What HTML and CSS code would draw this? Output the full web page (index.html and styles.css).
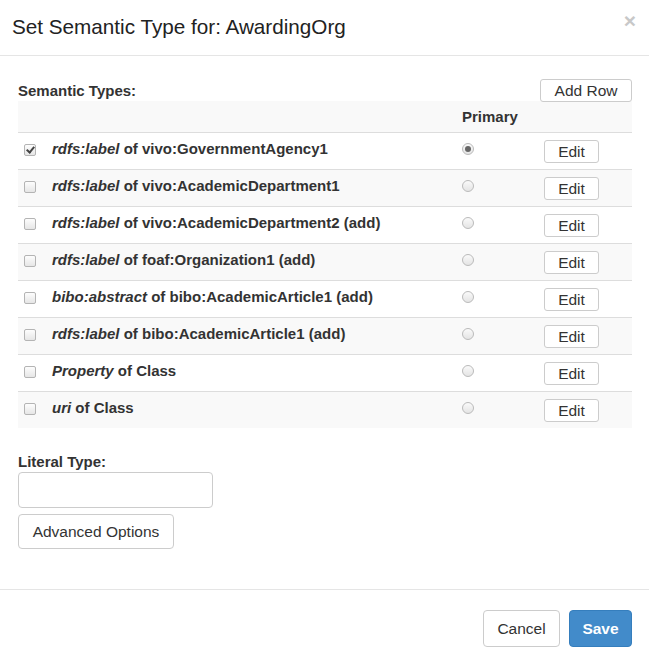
FILE: index.html
```html
<!DOCTYPE html>
<html>
<head>
<meta charset="utf-8">
<link rel="stylesheet" href="styles.css">
</head>
<body>
<div class="modal">
  <div class="modal-header">
    <h4 class="modal-title">Set Semantic Type for: AwardingOrg</h4>
    <span class="close">×</span>
  </div>
  <div class="modal-body">
    <div class="types-head">
      <span class="label">Semantic Types:</span>
      <button class="btn btn-sm">Add Row</button>
    </div>
    <table class="types">
      <tr class="thead">
        <td class="c-check"></td>
        <td class="c-label"></td>
        <td class="c-primary"><b>Primary</b></td>
        <td class="c-edit"></td>
      </tr>
      <tr>
        <td class="c-check"><span class="cb checked"></span></td>
        <td class="c-label"><i>rdfs:label</i> of vivo:GovernmentAgency1</td>
        <td class="c-primary"><span class="radio on"></span></td>
        <td class="c-edit"><button class="btn btn-sm">Edit</button></td>
      </tr>
      <tr>
        <td class="c-check"><span class="cb"></span></td>
        <td class="c-label"><i>rdfs:label</i> of vivo:AcademicDepartment1</td>
        <td class="c-primary"><span class="radio"></span></td>
        <td class="c-edit"><button class="btn btn-sm">Edit</button></td>
      </tr>
      <tr>
        <td class="c-check"><span class="cb"></span></td>
        <td class="c-label"><i>rdfs:label</i> of vivo:AcademicDepartment2 (add)</td>
        <td class="c-primary"><span class="radio"></span></td>
        <td class="c-edit"><button class="btn btn-sm">Edit</button></td>
      </tr>
      <tr>
        <td class="c-check"><span class="cb"></span></td>
        <td class="c-label"><i>rdfs:label</i> of foaf:Organization1 (add)</td>
        <td class="c-primary"><span class="radio"></span></td>
        <td class="c-edit"><button class="btn btn-sm">Edit</button></td>
      </tr>
      <tr>
        <td class="c-check"><span class="cb"></span></td>
        <td class="c-label"><i>bibo:abstract</i> of bibo:AcademicArticle1 (add)</td>
        <td class="c-primary"><span class="radio"></span></td>
        <td class="c-edit"><button class="btn btn-sm">Edit</button></td>
      </tr>
      <tr>
        <td class="c-check"><span class="cb"></span></td>
        <td class="c-label"><i>rdfs:label</i> of bibo:AcademicArticle1 (add)</td>
        <td class="c-primary"><span class="radio"></span></td>
        <td class="c-edit"><button class="btn btn-sm">Edit</button></td>
      </tr>
      <tr>
        <td class="c-check"><span class="cb"></span></td>
        <td class="c-label"><i>Property</i> of Class</td>
        <td class="c-primary"><span class="radio"></span></td>
        <td class="c-edit"><button class="btn btn-sm">Edit</button></td>
      </tr>
      <tr>
        <td class="c-check"><span class="cb"></span></td>
        <td class="c-label"><i>uri</i> of Class</td>
        <td class="c-primary"><span class="radio"></span></td>
        <td class="c-edit"><button class="btn btn-sm">Edit</button></td>
      </tr>
    </table>
    <div class="literal">
      <div class="label">Literal Type:</div>
      <input class="input" type="text">
      <button class="btn btn-adv">Advanced Options</button>
    </div>
  </div>
  <div class="modal-footer">
    <button class="btn btn-default">Cancel</button>
    <button class="btn btn-primary">Save</button>
  </div>
</div>
</body>
</html>
```
FILE: styles.css
```css
html, body {
  margin: 0;
  padding: 0;
  background: #fff;
}
body {
  font-family: "Liberation Sans", Arial, sans-serif;
  font-size: 15px;
  line-height: 20px;
  color: #333;
}
.modal {
  width: 649px;
  height: 662px;
  display: flex;
  flex-direction: column;
}
.modal-header {
  height: 56px;
  box-sizing: border-box;
  border-bottom: 1px solid #e5e5e5;
  display: flex;
  align-items: center;
  justify-content: space-between;
  padding: 0 13px 2px 12px;
}
.modal-title {
  margin: 0;
  font-size: 20.7px;
  font-weight: normal;
  color: #222;
  line-height: 26px;
}
.close {
  font-size: 21px;
  font-weight: bold;
  color: #c8c8c8;
  line-height: 21px;
  margin-top: -12px;
}
.modal-body {
  padding: 22px 17px 0 18px;
  flex: 1;
}
.types-head {
  display: flex;
  justify-content: space-between;
  align-items: center;
  height: 23px;
}
.label {
  font-weight: bold;
  color: #333;
}
.types-head .label {
  line-height: 18px;
  margin-top: 2px;
}
.btn {
  font-family: inherit;
  background: #fff;
  border: 1px solid #ccc;
  border-radius: 4px;
  color: #333;
  font-size: 15.5px;
  box-sizing: border-box;
  cursor: pointer;
  padding: 0;
}
.btn-sm {
  height: 23px;
  line-height: 21px;
  padding: 0 13px;
  border-radius: 3px;
}
.types-head .btn-sm {
  width: 92px;
  margin-top: 1px;
}
.types {
  width: 614px;
  border-collapse: collapse;
  border-spacing: 0;
}
.types td {
  padding: 0;
  height: 36px;
  border-top: 1px solid #ddd;
  vertical-align: middle;
}
.types tr:nth-child(odd) {
  background: #f9f9f9;
}
.types tr.thead td {
  height: 31px;
  border-top: none;
}
.types tr.thead td.c-label {
  height: 27px;
}
.c-check {
  width: 34px;
}
.c-check .cb {
  margin-left: 6px;
}
.types td.c-label {
  font-weight: bold;
  height: 32px;
  padding-bottom: 4px;
}
.c-label i {
  font-style: italic;
}
.c-primary {
  width: 82px;
}
.c-primary b {
  display: block;
  margin-top: 1px;
}
.c-edit {
  width: 88px;
}
.c-edit .btn-sm {
  width: 55px;
  padding: 0;
  margin-top: 1px;
}
.cb {
  display: block;
  width: 12px;
  height: 12px;
  box-sizing: border-box;
  border: 1px solid #b4b4b4;
  border-radius: 2px;
  background: linear-gradient(#fdfdfd, #e6e6e6);
  position: relative;
  margin-top: -3px;
}
.cb.checked::after {
  content: "";
  position: absolute;
  left: 3px;
  top: 0px;
  width: 3px;
  height: 6px;
  border: solid #444;
  border-width: 0 2px 2px 0;
  transform: rotate(40deg);
}
.radio {
  display: block;
  width: 12px;
  height: 12px;
  box-sizing: border-box;
  border: 1px solid #bbb;
  border-radius: 50%;
  background: linear-gradient(#fafafa, #e4e4e4);
  margin-left: 0;
  margin-top: -5px;
  position: relative;
}
.radio.on::after {
  content: "";
  position: absolute;
  left: 2px;
  top: 2px;
  width: 6px;
  height: 6px;
  border-radius: 50%;
  background: #666;
}
.literal {
  margin-top: 24px;
}
.literal .label {
  line-height: 20px;
}
.input {
  display: block;
  width: 195px;
  height: 36px;
  box-sizing: border-box;
  border: 1px solid #ccc;
  border-radius: 4px;
  margin-top: 0;
  font-family: inherit;
  font-size: 14px;
  padding: 6px 12px;
}
.btn-adv {
  display: block;
  margin-top: 6px;
  width: 156px;
  height: 35px;
  line-height: 33px;
}
.modal-footer {
  height: 73px;
  border-top: 1px solid #e5e5e5;
  display: flex;
  justify-content: flex-end;
  align-items: flex-start;
  padding: 20px 17px 0 0;
  gap: 9px;
  box-sizing: border-box;
}
.btn-default {
  width: 77px;
  height: 37px;
  line-height: 35px;
}
.btn-primary {
  width: 63px;
  height: 37px;
  line-height: 35px;
  background: #428bca;
  border-color: #357ebd;
  color: #fff;
  font-weight: bold;
}
```
